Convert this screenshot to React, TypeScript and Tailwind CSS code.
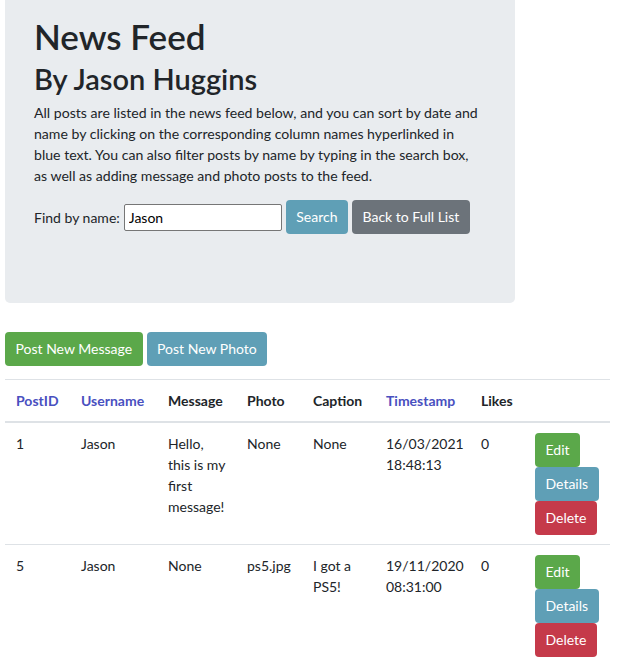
const posts = [
  {
    id: 1,
    username: "Jason",
    message: ["Hello,", "this is my", "first", "message!"],
    photo: "None",
    caption: "None",
    date: "16/03/2021",
    time: "18:48:13",
    likes: 0,
  },
  {
    id: 5,
    username: "Jason",
    message: ["None"],
    photo: "ps5.jpg",
    caption: "I got a PS5!",
    date: "19/11/2020",
    time: "08:31:00",
    likes: 0,
  },
];

const btn = "inline-block h-[34px] rounded-[4px] px-[10.5px] py-[6px] text-[14px] leading-[22px] text-white whitespace-nowrap";

export default function App() {
  return (
    <div className="min-h-[662px] w-[617px] bg-white text-[#212529] [font-family:'Segoe_UI',Lato,'Open_Sans',sans-serif]">
      <div className="px-[5px]">
        {/* Jumbotron */}
        <div className="w-[510px] h-[303px] rounded-b-[5px] bg-[#e9ecef] px-[29px] pt-[15px]">
          <h1 className="text-[35px] leading-[43px] font-semibold">News Feed</h1>
          <h2 className="mt-[3px] text-[29px] leading-[35px] font-semibold">By Jason Huggins</h2>
          <p className="mt-[6px] text-[14.1px] leading-[21px] whitespace-nowrap">
            All posts are listed in the news feed below, and you can sort by date and
            <br />
            name by clicking on the corresponding column names hyperlinked in
            <br />
            blue text. You can also filter posts by name by typing in the search box,
            <br />
            as well as adding message and photo posts to the feed.
          </p>
          <div className="mt-[14px] flex items-center text-[14px]">
            <span className="mr-[4px]">Find by name:</span>
            <input
              defaultValue="Jason"
              className="w-[158px] h-[27px] border border-[#767676] rounded-[2px] bg-white px-[4px] text-[14px] text-black outline-none"
            />
            <span className={`${btn} ml-[4px] bg-[#5f9fb6]`}>Search</span>
            <span className={`${btn} ml-[4px] bg-[#6c737a]`}>Back to Full List</span>
          </div>
        </div>

        {/* Actions */}
        <div className="mt-[29px] flex gap-[4px]">
          <span className={`${btn} bg-[#5ba84a]`}>Post New Message</span>
          <span className={`${btn} bg-[#5f9fb6]`}>Post New Photo</span>
        </div>

        {/* Table */}
        <table className="mt-[13px] w-[605px] border-collapse text-[14px] leading-[21px] table-fixed">
          <colgroup>
            <col className="w-[65px]" />
            <col className="w-[87px]" />
            <col className="w-[79px]" />
            <col className="w-[66px]" />
            <col className="w-[73px]" />
            <col className="w-[95px]" />
            <col className="w-[54px]" />
            <col className="w-[86px]" />
          </colgroup>
          <thead>
            <tr className="border-t border-[#dee2e6] border-b-2">
              <th className="px-[11px] py-[10px] text-left font-bold text-[#4950c0]">PostID</th>
              <th className="px-[11px] py-[10px] text-left font-bold text-[#4950c0]">Username</th>
              <th className="px-[11px] py-[10px] text-left font-bold">Message</th>
              <th className="px-[11px] py-[10px] text-left font-bold">Photo</th>
              <th className="px-[11px] py-[10px] text-left font-bold">Caption</th>
              <th className="px-[11px] py-[10px] text-left font-bold text-[#4950c0]">Timestamp</th>
              <th className="px-[11px] py-[10px] text-left font-bold">Likes</th>
              <th className="px-[11px] py-[10px]"></th>
            </tr>
          </thead>
          <tbody>
            {posts.map((p) => (
              <tr key={p.id} className="border-t border-[#dee2e6] align-top">
                <td className="px-[11px] py-[10px]">{p.id}</td>
                <td className="px-[11px] py-[10px]">{p.username}</td>
                <td className="px-[11px] py-[10px] whitespace-nowrap">
                  {p.message.map((line, i) => (
                    <div key={i}>{line}</div>
                  ))}
                </td>
                <td className="px-[11px] py-[10px]">{p.photo}</td>
                <td className="px-[11px] py-[10px]">{p.caption}</td>
                <td className="px-[11px] py-[10px]">
                  {p.date}
                  <br />
                  {p.time}
                </td>
                <td className="px-[11px] py-[10px]">{p.likes}</td>
                <td className="px-[11px] pt-[10px] pb-[9px]">
                  <div className="flex flex-col items-start">
                    <span className={`${btn} bg-[#5ba84a]`}>Edit</span>
                    <span className={`${btn} bg-[#5f9fb6]`}>Details</span>
                    <span className={`${btn} bg-[#c53a4a]`}>Delete</span>
                  </div>
                </td>
              </tr>
            ))}
          </tbody>
        </table>
      </div>
    </div>
  );
}
